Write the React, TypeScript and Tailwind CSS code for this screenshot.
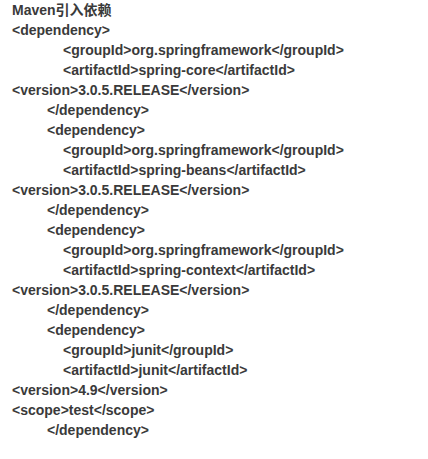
const lines: [number, string][] = [
  [0, "Maven引入依赖"],
  [0, "<dependency>"],
  [51, "<groupId>org.springframework</groupId>"],
  [51, "<artifactId>spring-core</artifactId>"],
  [0, "<version>3.0.5.RELEASE</version>"],
  [35, "</dependency>"],
  [35, "<dependency>"],
  [51, "<groupId>org.springframework</groupId>"],
  [51, "<artifactId>spring-beans</artifactId>"],
  [0, "<version>3.0.5.RELEASE</version>"],
  [35, "</dependency>"],
  [35, "<dependency>"],
  [51, "<groupId>org.springframework</groupId>"],
  [51, "<artifactId>spring-context</artifactId>"],
  [0, "<version>3.0.5.RELEASE</version>"],
  [35, "</dependency>"],
  [35, "<dependency>"],
  [51, "<groupId>junit</groupId>"],
  [51, "<artifactId>junit</artifactId>"],
  [0, "<version>4.9</version>"],
  [0, "<scope>test</scope>"],
  [35, "</dependency>"],
];

export default function App() {
  return (
    <div className="w-[428px] h-[459px] bg-white pt-[0px] pl-3 text-[14px] leading-[20px] font-bold text-[#3a3a3a] [font-family:'Liberation_Sans','Noto_Sans_CJK_SC',sans-serif]">
      {lines.map(([indent, text], i) => (
        <div key={i} style={{ paddingLeft: indent }} className="whitespace-pre">
          {text}
        </div>
      ))}
    </div>
  );
}
